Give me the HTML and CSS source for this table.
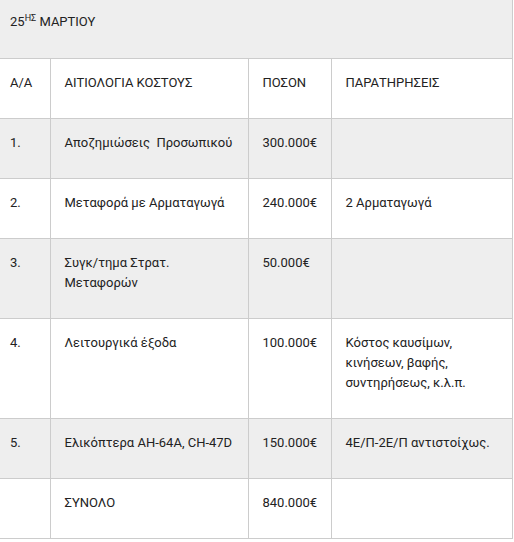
FILE: index.html
```html
<!DOCTYPE html>
<html lang="el">
<head>
<meta charset="utf-8">
<title>Κόστος</title>
<link rel="stylesheet" href="styles.css">
</head>
<body>
<table class="cost">
  <colgroup>
    <col class="c-aa">
    <col class="c-desc">
    <col class="c-amt">
    <col class="c-note">
  </colgroup>
  <tr class="shade">
    <td class="title" colspan="4">25<sup>ΗΣ</sup> ΜΑΡΤΙΟΥ</td>
  </tr>
  <tr>
    <td>Α/Α</td>
    <td>ΑΙΤΙΟΛΟΓΙΑ ΚΟΣΤΟΥΣ</td>
    <td>ΠΟΣΟΝ</td>
    <td>ΠΑΡΑΤΗΡΗΣΕΙΣ</td>
  </tr>
  <tr class="shade">
    <td>1.</td>
    <td>Αποζημιώσεις&nbsp; Προσωπικού</td>
    <td>300.000€</td>
    <td></td>
  </tr>
  <tr>
    <td>2.</td>
    <td>Μεταφορά με Αρματαγωγά</td>
    <td>240.000€</td>
    <td>2 Αρματαγωγά</td>
  </tr>
  <tr class="shade">
    <td>3.</td>
    <td>Συγκ/τημα Στρατ.<br>Μεταφορών</td>
    <td>50.000€</td>
    <td></td>
  </tr>
  <tr>
    <td>4.</td>
    <td>Λειτουργικά έξοδα</td>
    <td>100.000€</td>
    <td>Κόστος καυσίμων,<br>κινήσεων, βαφής,<br>συντηρήσεως, κ.λ.π.</td>
  </tr>
  <tr class="shade">
    <td>5.</td>
    <td>Ελικόπτερα ΑΗ-64Α, CH-47D</td>
    <td>150.000€</td>
    <td>4Ε/Π-2Ε/Π αντιστοίχως.</td>
  </tr>
  <tr>
    <td></td>
    <td>ΣΥΝΟΛΟ</td>
    <td>840.000€</td>
    <td></td>
  </tr>
</table>
</body>
</html>
```
FILE: styles.css
```css
html, body {
  margin: 0;
  padding: 0;
  background: #fff;
}
.cost {
  border-collapse: collapse;
  table-layout: fixed;
  width: 512px;
  font-family: Roboto, "Noto Sans", sans-serif;
  font-size: 13px;
  line-height: 20px;
  color: #222;
}
.c-aa { width: 50px; }
.c-desc { width: 198px; }
.c-amt { width: 83px; }
.c-note { width: 181px; }
.cost td {
  border: 1px solid #ccc;
  padding: 14px 10px 25px 14px;
  vertical-align: top;
}
.cost td:first-child {
  border-left: none;
  padding-left: 10px;
}
.cost tr.shade td {
  background: #eee;
}
.cost td.title {
  border-top: none;
  padding: 12px 10px 26px 10px;
}
.title sup {
  font-size: 9px;
  line-height: 0;
  vertical-align: 5px;
}
```
